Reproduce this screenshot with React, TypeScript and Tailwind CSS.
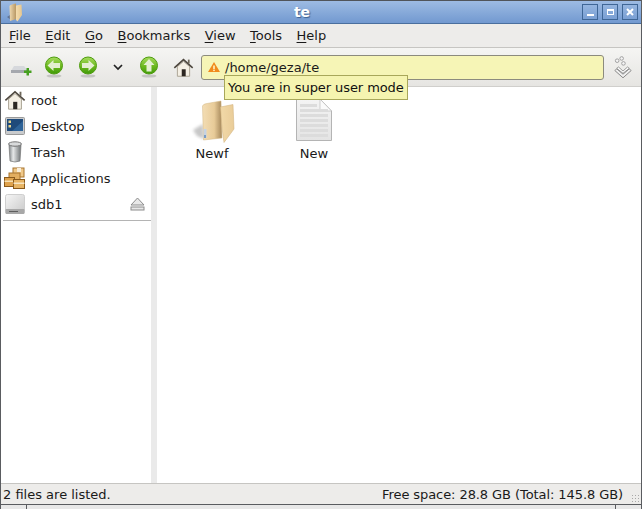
import React from "react";

const Arrow = ({ dir }: { dir: "left" | "right" | "up" }) => {
  const rot = dir === "left" ? 0 : dir === "right" ? 180 : 90;
  return (
    <svg width="20" height="24" viewBox="0 0 20 24" className="shrink-0">
      <defs>
        <linearGradient id={"g" + dir} x1="0" y1="0" x2="0" y2="1">
          <stop offset="0" stopColor="#a6dc5e" />
          <stop offset="0.55" stopColor="#6cb81e" />
          <stop offset="1" stopColor="#3f9a08" />
        </linearGradient>
      </defs>
      <ellipse cx="10" cy="21" rx="7.5" ry="1.6" fill="#c4c4c2" />
      <circle cx="10" cy="10.5" r="8.5" fill={"url(#g" + dir + ")"} stroke="#4f9c10" />
      <g transform={`rotate(${rot} 10 10.5)`}>
        <path d="M3.5 10.5 L9.5 5 V8 H16 V13 H9.5 V16 Z" fill="#e4efd2" />
      </g>
    </svg>
  );
};

const HomeIcon = ({ size = 24 }: { size?: number }) => (
  <svg width={size} height={size} viewBox="0 0 24 24" className="shrink-0">
    <path d="M5 11 V22 H19 V11 L12 5 Z" fill="#f4efe4" stroke="#a39c8c" />
    <rect x="10" y="14" width="4.5" height="8" fill="#2c2722" />
    <path d="M1.5 12.5 L12 3 L22.5 12.5" fill="none" stroke="#4d463d" strokeWidth="1.8" />
    <rect x="17" y="3" width="2" height="4.5" fill="#6d6659" />
  </svg>
);

const DesktopIcon = () => (
  <svg width="20" height="18" viewBox="0 0 20 18" className="shrink-0">
    <rect x="0.5" y="0.5" width="19" height="17" rx="1" fill="#c9cbcd" stroke="#9a9a9a" />
    <rect x="2" y="2" width="16" height="12" fill="#1f4a7a" />
    <path d="M7 14 L18 4 V14 Z" fill="#2e6398" />
    <rect x="3.5" y="3.5" width="2.5" height="2.5" fill="#e8d48c" />
    <rect x="3.5" y="8" width="2.5" height="2.5" fill="#e8d48c" />
  </svg>
);

const TrashIcon = () => (
  <svg width="16" height="22" viewBox="0 0 16 22" className="shrink-0">
    <defs>
      <linearGradient id="tr" x1="0" y1="0" x2="1" y2="0">
        <stop offset="0" stopColor="#7f8588" />
        <stop offset="0.35" stopColor="#e6e8e9" />
        <stop offset="1" stopColor="#6f7476" />
      </linearGradient>
    </defs>
    <path d="M2 4 L3 20 Q8 22 13 20 L14 4 Q8 6 2 4 Z" fill="url(#tr)" stroke="#777" strokeWidth="0.7" />
    <ellipse cx="8" cy="3" rx="6.5" ry="2.2" fill="#d8dadb" stroke="#777" />
  </svg>
);

const AppsIcon = () => (
  <svg width="22" height="22" viewBox="0 0 22 22" className="shrink-0">
    <rect x="9" y="1" width="11" height="9" fill="#f0c98a" stroke="#a8742e" />
    <rect x="13" y="1" width="4" height="4" fill="#f9eeda" />
    <rect x="5" y="6" width="11" height="7" fill="#e3ae60" stroke="#a8742e" />
    <rect x="0.5" y="10.5" width="10" height="9" fill="#dfa24c" stroke="#8a5a1c" />
    <rect x="0.5" y="13.5" width="10" height="1.5" fill="#f5e0b4" />
    <rect x="9.5" y="12.5" width="11" height="9" fill="#e8b565" stroke="#8a5a1c" />
    <rect x="9.5" y="15.5" width="11" height="1.5" fill="#f7e6c4" />
  </svg>
);

const DriveIcon = () => (
  <svg width="20" height="21" viewBox="0 0 20 21" className="shrink-0">
    <defs>
      <linearGradient id="dr" x1="0" y1="0" x2="1" y2="1">
        <stop offset="0" stopColor="#f6f6f6" />
        <stop offset="1" stopColor="#c9c9c9" />
      </linearGradient>
    </defs>
    <rect x="0.5" y="0.5" width="19" height="19" rx="2" fill="url(#dr)" stroke="#cfcfcf" />
    <rect x="0.5" y="15" width="19" height="5" rx="1" fill="#a8a8a8" />
    <rect x="4" y="17" width="9" height="1" fill="#5e5e5e" />
  </svg>
);

const TitleFolder = () => (
  <svg width="16" height="19" viewBox="0 0 32 38" className="shrink-0">
    <defs>
      <linearGradient id="tfa" x1="0" y1="0" x2="1" y2="0">
        <stop offset="0" stopColor="#efd9b0" />
        <stop offset="1" stopColor="#b4935f" />
      </linearGradient>
      <linearGradient id="tfb" x1="0" y1="0" x2="1" y2="0">
        <stop offset="0" stopColor="#f3dcae" />
        <stop offset="1" stopColor="#e6c68e" />
      </linearGradient>
    </defs>
    <path d="M2 28 L8 24 L10 34 Z" fill="#5f7396" />
    <path d="M7 6 Q8 3 20 1 L21 32 L8 36 Z" fill="url(#tfa)" />
    <path d="M20 5 L31 3 L32 24 L23 37 L20 34 Z" fill="url(#tfb)" />
  </svg>
);

const BigFolder = () => (
  <svg width="50" height="50" viewBox="0 0 50 50" className="shrink-0">
    <defs>
      <linearGradient id="fa" x1="0" y1="0" x2="1" y2="0">
        <stop offset="0" stopColor="#f3ddb4" />
        <stop offset="0.6" stopColor="#e8cb98" />
        <stop offset="1" stopColor="#a5875a" />
      </linearGradient>
      <linearGradient id="fb" x1="0" y1="0" x2="1" y2="0">
        <stop offset="0" stopColor="#f2d9a8" />
        <stop offset="1" stopColor="#e9cc98" />
      </linearGradient>
      <filter id="fs" x="-50%" y="-50%" width="200%" height="200%">
        <feGaussianBlur stdDeviation="1.5" />
      </filter>
    </defs>
    <path d="M6 36 L16 30 L17 45 L10 42 Z" fill="#9a9a9a" opacity="0.55" filter="url(#fs)" />
    <path d="M15.5 12 Q16 10 20 9.5 L34 7 L35 44 L16.5 46 Z" fill="url(#fa)" stroke="#d2b682" strokeWidth="0.5" />
    <path d="M33.5 13 L46 10.5 L47 35 L37 48.5 L35 34 Z" fill="url(#fb)" stroke="#cfae78" strokeWidth="0.5" />
    <rect x="16.5" y="35" width="3" height="9" fill="#c7d3e2" />
    <rect x="17" y="41" width="2" height="3" fill="#7a9cc6" />
  </svg>
);

const DocIcon = () => (
  <svg width="38" height="44" viewBox="0 0 38 44">
    <defs>
      <linearGradient id="doc" x1="0" y1="0" x2="0" y2="1">
        <stop offset="0" stopColor="#f4f4f4" />
        <stop offset="1" stopColor="#e4e4e4" />
      </linearGradient>
    </defs>
    <path d="M1.5 1 H25 L36.5 13 V42.5 H1.5 Z" fill="url(#doc)" stroke="#b4b4b4" />
    <path d="M25 1 V12 Q25 13 27 13 H36.5 Z" fill="#fbfbfb" stroke="#bdbdbd" strokeWidth="0.7" />
    {[6, 11, 16, 21, 26, 31, 36].map((y, i) => (
      <rect key={y} x="5" y={y} width={i === 0 ? 17 : 28} height="3" fill="#dcdcdc" />
    ))}
  </svg>
);

const Menu = ({ label }: { label: string }) => (
  <span>
    <span className="underline underline-offset-2 decoration-1">{label[0]}</span>
    {label.slice(1)}
  </span>
);

const Place = ({ icon, label, extra }: { icon: React.ReactNode; label: string; extra?: React.ReactNode }) => (
  <div className="flex h-[26px] items-center">
    <div className="flex w-[30px] shrink-0 justify-center pr-[3px]">{icon}</div>
    <span className="flex-1">{label}</span>
    {extra}
  </div>
);

export default function App() {
  return (
    <div className="relative flex h-[509px] w-[642px] flex-col overflow-hidden border-x border-[#5a5c60] bg-white text-[13px] leading-none text-[#1a1a1a] [font-family:'DejaVu_Sans',sans-serif]">
      <div className="flex h-[24px] shrink-0 items-center border-y border-t-[#50545a] border-b-[#4a6f9e] bg-gradient-to-b from-[#9dbbe3] to-[#7299d0] pl-[5px] pr-[3px]">
        <TitleFolder />
        <div className="flex-1 text-center text-[14px] font-bold text-white [text-shadow:1px_1px_1px_#3c5f8f]">te</div>
        <div className="flex gap-[4px]">
          <div className="flex h-[16px] w-[16px] items-end justify-center border border-[#3f6696] pb-[3px]">
            <div className="h-[2px] w-[7px] bg-white" />
          </div>
          <div className="flex h-[16px] w-[16px] items-center justify-center border border-[#3f6696]">
            <div className="h-[6px] w-[7px] border border-t-2 border-white" />
          </div>
          <div className="flex h-[16px] w-[16px] items-center justify-center border border-[#3f6696]">
            <svg width="8" height="8" viewBox="0 0 8 8"><path d="M1 1 L7 7 M7 1 L1 7" stroke="#fff" strokeWidth="2" /></svg>
          </div>
        </div>
      </div>

      <div className="flex h-[24px] shrink-0 items-center gap-[14.5px] border-b border-[#c6c5c2] bg-[#edecea] pl-[8px]">
        {["File", "Edit", "Go", "Bookmarks", "View", "Tools", "Help"].map((m) => (
          <Menu key={m} label={m} />
        ))}
      </div>

      <div className="flex h-[39px] shrink-0 items-center border-b border-[#d0cfcc] bg-gradient-to-b from-[#f5f5f3] to-[#e6e5e2] pl-[9px] pr-[6px]">
        <svg width="22" height="16" viewBox="0 0 22 16" className="mt-1 shrink-0">
          <path d="M4 5 H14 L18 10 H1 Z" fill="#d6d8dc" />
          <rect x="1" y="9" width="17" height="3" fill="#a5a8ae" />
          <path d="M16.5 7 h2.5 v2.5 h2.5 v2.5 h-2.5 v2.5 h-2.5 v-2.5 h-2.5 v-2.5 h2.5 Z" fill="#46a020" />
        </svg>
        <div className="ml-[12px]"><Arrow dir="left" /></div>
        <div className="ml-[14px]"><Arrow dir="right" /></div>
        <svg width="10" height="7" viewBox="0 0 10 7" className="ml-[15px] shrink-0">
          <path d="M1 1 L5 5 L9 1" fill="none" stroke="#222" strokeWidth="1.7" />
        </svg>
        <div className="ml-[16px]"><Arrow dir="up" /></div>
        <div className="ml-[14px]"><HomeIcon size={21} /></div>
        <div className="ml-[7px] flex h-[25px] flex-1 items-center rounded-[3px] border border-[#8c8b7e] bg-[#f6f5b6] pl-[5px]">
          <svg width="14" height="12" viewBox="0 0 14 12" className="shrink-0">
            <path d="M7 1 L13 11 H1 Z" fill="#f08a1c" />
            <rect x="6.2" y="4.5" width="1.6" height="3.5" fill="#fff3c0" />
            <rect x="6.2" y="8.6" width="1.6" height="1.5" fill="#fff3c0" />
          </svg>
          <span className="ml-[4px]">/home/geza/te</span>
        </div>
        <svg width="18" height="26" viewBox="0 0 20 26" className="ml-[10px] mr-[3px] shrink-0">
          <circle cx="3.5" cy="6" r="2" fill="#f4f4f4" stroke="#9a9a9a" />
          <circle cx="8.5" cy="3.5" r="2" fill="#f4f4f4" stroke="#9a9a9a" />
          <circle cx="10.5" cy="9" r="2" fill="#f4f4f4" stroke="#9a9a9a" />
          <path d="M3 15 L10 21 L17 15 L19 17 L10 25 L1 17 Z" fill="#efefef" stroke="#7d7d7d" />
          <path d="M5 13 L10 17.5 L15 13 L17 14.5 L10 20 L3 14.5 Z" fill="#fff" stroke="#8d8d8d" />
        </svg>
      </div>

      <div className="flex min-h-0 flex-1">
        <div className="w-[150px] shrink-0">
          <Place icon={<HomeIcon size={22} />} label="root" />
          <Place icon={<DesktopIcon />} label="Desktop" />
          <Place icon={<TrashIcon />} label="Trash" />
          <Place icon={<AppsIcon />} label="Applications" />
          <Place
            icon={<DriveIcon />}
            label="sdb1"
            extra={
              <svg width="15" height="14" viewBox="0 0 15 14" className="mr-[6px] shrink-0">
                <path d="M7.5 1 L14 8 H1 Z" fill="#e8e8e8" stroke="#8c8c8c" />
                <rect x="1" y="10" width="13" height="3" fill="#e8e8e8" stroke="#8c8c8c" />
              </svg>
            }
          />
          <div className="mt-[3px] ml-[2px] border-t border-[#b4b4b4]" />
        </div>
        <div className="flex w-[6px] shrink-0 items-center justify-center bg-[#eaeaea]">
          <div className="h-[46px] w-[4px] bg-[radial-gradient(#9a9a9a_0.6px,transparent_0.7px)] bg-[length:2px_2px]" />
        </div>
        <div className="flex flex-1 gap-[30px] pl-[19px] pt-[7px]">
          <div className="flex w-[72px] flex-col items-center">
            <BigFolder />
            <span className="mt-[3px]">Newf</span>
          </div>
          <div className="flex w-[72px] flex-col items-center">
            <div className="pt-[4px]"><DocIcon /></div>
            <span className="mt-[5px]">New</span>
          </div>
        </div>
      </div>

      <div className="relative flex h-[21px] shrink-0 items-center justify-between border-t border-[#c6c5c2] bg-[#edecea] pl-[2px] pr-[18px]">
        <span>2 files are listed.</span>
        <span className="tracking-[-0.08px]">Free space: 28.8 GB (Total: 145.8 GB)</span>
        <div className="absolute bottom-0 right-0 h-[10px] w-[10px] bg-[radial-gradient(#a8a8a8_0.6px,transparent_0.7px)] bg-[length:3px_3px]" />
      </div>
      <div className="flex h-[5px] shrink-0 justify-between border-t border-[#5a5c60] bg-[#e8e8e8] pl-[25px] pr-[25px]">
        <div className="w-px bg-[#5a5c60]" />
        <div className="w-px bg-[#5a5c60]" />
      </div>

      <div className="absolute left-[223px] top-[75px] flex h-[25px] w-[184px] items-center border border-[#a8a75a] bg-[#f5f4b0] pl-[3px] tracking-[-0.08px] text-[#111]">
        You are in super user mode
      </div>
    </div>
  );
}
